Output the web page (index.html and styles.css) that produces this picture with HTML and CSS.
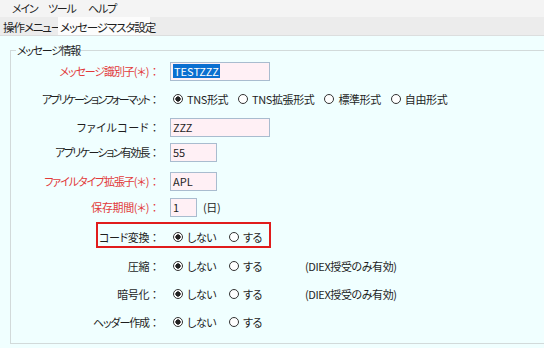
FILE: index.html
```html
<!DOCTYPE html>
<html lang="ja">
<head>
<meta charset="utf-8">
<link rel="stylesheet" href="styles.css">
</head>
<body>
<div class="menubar">
  <span class="menu-item">メイン</span>
  <span class="menu-item">ツール</span>
  <span class="menu-item">ヘルプ</span>
</div>
<div class="tabbar">
  <span class="tab tab-first">操作メニュー</span>
  <span class="tab tab-active">メッセージマスタ設定</span>
</div>
<div class="content">
  <fieldset class="group">
    <legend class="legend">メッセージ情報</legend>
    <div class="row">
      <span class="label req"><span class="ls-m">メッセージ識別子</span>(＊)<span class="colon">：</span></span>
      <span class="field w-long"><span class="sel">TESTZZZ</span></span>
    </div>
    <div class="row">
      <span class="label"><span class="ls-xl">アプリケーションフォーマット</span><span class="colon">：</span></span>
      <span class="opts">
        <span class="opt"><span class="radio on"></span>TNS形式</span>
        <span class="opt"><span class="radio"></span>TNS拡張形式</span>
        <span class="opt"><span class="radio"></span>標準形式</span>
        <span class="opt"><span class="radio"></span>自由形式</span>
      </span>
    </div>
    <div class="row">
      <span class="label"><span class="ls-p">ファイルコード</span><span class="colon">：</span></span>
      <span class="field w-long">ZZZ</span>
    </div>
    <div class="row row-up3">
      <span class="label"><span class="ls-l">アプリケーション有効長</span><span class="colon">：</span></span>
      <span class="field w-mid">55</span>
    </div>
    <div class="row row-down1">
      <span class="label req"><span class="ls-m">ファイルタイプ拡張子</span>(＊)<span class="colon">：</span></span>
      <span class="field w-mid">APL</span>
    </div>
    <div class="row row-up2">
      <span class="label req">保存期間(＊)<span class="colon">：</span></span>
      <span class="field w-short">1</span>
      <span class="unit">(日)</span>
    </div>
    <div class="row row-mark row-down2">
      <span class="label">コード変換<span class="colon">：</span></span>
      <span class="yn">
        <span class="opt opt-fixed"><span class="radio on"></span>しない</span>
        <span class="opt"><span class="radio"></span>する</span>
      </span>
    </div>
    <div class="row row-down1">
      <span class="label">圧縮<span class="colon">：</span></span>
      <span class="yn">
        <span class="opt opt-fixed"><span class="radio on"></span>しない</span>
        <span class="opt"><span class="radio"></span>する</span>
      </span>
      <span class="note">(DIEX授受のみ有効)</span>
    </div>
    <div class="row">
      <span class="label">暗号化<span class="colon">：</span></span>
      <span class="yn">
        <span class="opt opt-fixed"><span class="radio on"></span>しない</span>
        <span class="opt"><span class="radio"></span>する</span>
      </span>
      <span class="note">(DIEX授受のみ有効)</span>
    </div>
    <div class="row">
      <span class="label"><span class="ls-m">ヘッダー作成</span><span class="colon">：</span></span>
      <span class="yn">
        <span class="opt opt-fixed"><span class="radio on"></span>しない</span>
        <span class="opt"><span class="radio"></span>する</span>
      </span>
    </div>
  </fieldset>
</div>
</body>
</html>
```
FILE: styles.css
```css
html, body {
  margin: 0;
  padding: 0;
  width: 544px;
  height: 348px;
  overflow: hidden;
  background: #f0ffff;
  font-family: "Noto Sans CJK JP", "Noto Sans", sans-serif;
  font-size: 11px;
  letter-spacing: -0.4px;
  color: #1e1e1e;
  font-feature-settings: "palt";
}

.menubar {
  height: 17px;
  background: #f4f4f4;
  display: flex;
  align-items: center;
  padding-left: 12px;
  line-height: 17px;
}

.menu-item {
  white-space: nowrap;
  width: 36px;
  flex: none;
  letter-spacing: -1.2px;
}

.menu-item + .menu-item {
  width: 40px;
}

.tabbar {
  height: 18px;
  background: #ececec;
  border-bottom: 1px solid #dcdede;
  display: flex;
  align-items: stretch;
}

.tab {
  display: flex;
  align-items: center;
  white-space: nowrap;
  box-sizing: border-box;
  font-size: 11.5px;
  letter-spacing: -1.1px;
  padding-top: 1px;
}

.tab-first {
  width: 58px;
  padding-left: 3px;
}

.tab-active {
  width: 92px;
  background: #fcfcfc;
  padding-left: 2px;
}

.content {
  background: #f0ffff;
  padding-top: 6px;
}

.group {
  margin: 0 -20px 0 10px;
  padding: 0 0 0 5px;
  border: 1px solid #d2dada;
  height: 302px;
  box-sizing: border-box;
}

.legend {
  padding: 0 1px;
  line-height: 16px;
  letter-spacing: -1.3px;
}

.row {
  position: relative;
  display: flex;
  align-items: center;
  height: 28px;
}

.row:first-of-type {
  margin-top: -1px;
}

.row-up3 { margin-top: -3px; }
.row-up2 { margin-top: -2px; }
.row-down1 { margin-top: 1px; }
.row-down2 { margin-top: 2px; }

.label {
  width: 144px;
  flex: none;
  text-align: right;
  white-space: nowrap;
  margin-right: 10px;
}

.ls-xl { letter-spacing: -1.9px; }
.ls-l { letter-spacing: -1.6px; }
.ls-m { letter-spacing: -1.1px; }
.ls-p { letter-spacing: 0.6px; }

.colon {
  font-feature-settings: normal;
  letter-spacing: 0;
}

.req {
  color: #e23a3a;
}

.field {
  box-sizing: border-box;
  height: 19px;
  border: 1px solid #a9bccf;
  background: #fff0f5;
  display: flex;
  align-items: center;
  padding-left: 2px;
  white-space: nowrap;
  letter-spacing: 0;
}

.w-long { width: 100px; }
.w-mid { width: 47px; }
.w-short { width: 27px; }

.sel {
  background: #0a6fd0;
  color: #ffffff;
  padding: 0 1px;
  line-height: 14px;
}

.unit {
  margin-left: 6px;
}

.opts {
  display: flex;
  align-items: center;
  gap: 10px;
  margin-left: 3px;
}

.opt {
  display: flex;
  align-items: center;
  white-space: nowrap;
}

.radio {
  width: 10px;
  height: 10px;
  box-sizing: border-box;
  border: 1px solid #333333;
  border-radius: 50%;
  margin-right: 4px;
  flex: none;
  background: #ffffff;
}

.radio.on {
  background: radial-gradient(circle, #222222 0 2.4px, #ffffff 2.9px);
}

.yn {
  display: flex;
  align-items: center;
  width: 132px;
  flex: none;
  margin-left: 3px;
}

.opt-fixed {
  width: 56px;
}

.note {
  white-space: nowrap;
}

.row-mark::after {
  content: "";
  position: absolute;
  left: 80px;
  top: -1px;
  width: 175px;
  height: 26px;
  box-sizing: border-box;
  border: 2px solid #e01c1c;
}
```
